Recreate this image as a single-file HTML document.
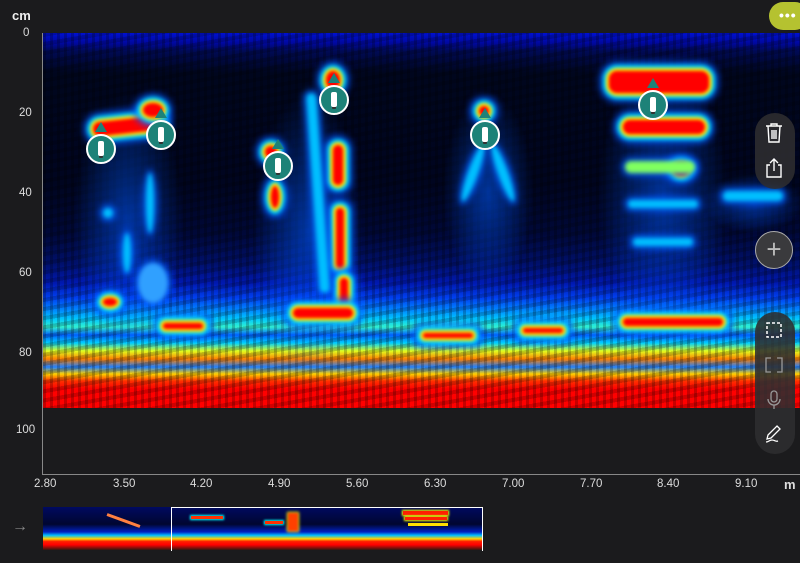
<!DOCTYPE html>
<html><head><meta charset="utf-8"><style>
*{margin:0;padding:0;box-sizing:border-box}
body{width:800px;height:563px;background:#1b1b1d;font-family:"Liberation Sans",sans-serif;color:#e6e6e6;position:relative;overflow:hidden}
.abs{position:absolute}
#plot{left:43px;top:33px;width:757px;height:375px;overflow:hidden;
background:
repeating-linear-gradient(90deg,rgba(0,0,0,.22) 0 3px,rgba(0,0,0,0) 3px 7px),
repeating-linear-gradient(170deg,rgba(0,0,0,.18) 0 4px,rgba(0,0,0,0) 4px 9px),
linear-gradient(180deg,#0010d0 0,#0008a0 10px,#000a55 18px,#00061e 40px,#000520 150px,#000838 200px,#00106a 230px,#0018b0 250px,#0040f0 265px,#0080ff 276px,#00c8ff 286px,#30f0d0 294px,#0060ff 302px,#00d0ff 310px,#e0ff20 318px,#ff8000 326px,#2080ff 334px,#ffd000 341px,#ff3000 348px,#ff0000 356px,#ff0000 375px)}
.glow{position:absolute;border-radius:50%;background:radial-gradient(closest-side,rgba(0,90,255,.55),rgba(0,60,255,0));}
.b{position:absolute;border-radius:50%;background:#ff0000;box-shadow:0 0 0 3px #ffe000,0 0 3px 6px #00e8ff,0 0 6px 10px rgba(0,80,255,.7);filter:blur(1.5px)}
.c{position:absolute;border-radius:50%;background:#00c0ff;box-shadow:0 0 4px 4px rgba(0,90,255,.7);filter:blur(2px)}
.ax{position:absolute;font-size:11.5px;color:#ddd}
.mk{position:absolute;width:30px;height:30px;border-radius:50%;background:#1d8278;border:2px solid #fff}
.mk::before{content:"";position:absolute;left:7px;top:-14px;border-left:6px solid transparent;border-right:6px solid transparent;border-bottom:10px solid #1d8278}
.mk::after{content:"";position:absolute;left:10px;top:5px;width:6px;height:15px;background:#fff;border-radius:2px;box-shadow:0 3px 0 -1px #333}
.pill{position:absolute;left:755px;width:40px;background:rgba(45,45,48,.88);border-radius:20px}
</style></head><body>
<div class="abs" style="left:12px;top:8px;font-size:13px;font-weight:bold;color:#eee">cm</div>
<div class="abs" style="left:769px;top:2px;width:40px;height:28px;border-radius:14px;background:#b5c230;color:#fff;font-size:14px;font-weight:bold;padding:5px 0 0 10px;letter-spacing:1px">•••</div>

<div id="plot" class="abs">
 <div class="glow" style="left:30px;top:60px;width:110px;height:260px"></div>
 <div class="glow" style="left:210px;top:60px;width:110px;height:280px"></div>
 <div class="glow" style="left:400px;top:60px;width:90px;height:200px"></div>
 <div class="glow" style="left:555px;top:30px;width:130px;height:270px"></div>
 <div class="glow" style="left:660px;top:140px;width:100px;height:60px"></div>
 <!-- column 1 -->
 <div class="b" style="left:50px;top:86px;width:70px;height:14px;border-radius:7px;transform:rotate(-6deg)"></div>
 <div class="b" style="left:100px;top:70px;width:20px;height:14px"></div>
 <div class="c" style="left:60px;top:175px;width:10px;height:10px"></div>
 <div class="c" style="left:103px;top:140px;width:8px;height:60px"></div>
 <div class="c" style="left:80px;top:200px;width:8px;height:40px"></div>
 <div class="c" style="left:95px;top:230px;width:30px;height:40px;background:#30a0ff"></div>
 <!-- column 2 -->
 <div class="b" style="left:222px;top:113px;width:12px;height:12px"></div>
 <div class="b" style="left:228px;top:153px;width:8px;height:22px"></div>
 <div class="b" style="left:283px;top:38px;width:14px;height:18px"></div>
 <div class="b" style="left:290px;top:112px;width:10px;height:40px;border-radius:5px"></div>
 <div class="b" style="left:293px;top:175px;width:8px;height:60px;border-radius:4px"></div>
 <div class="b" style="left:297px;top:245px;width:8px;height:30px;border-radius:4px"></div>
 <div class="c" style="left:270px;top:60px;width:10px;height:200px;border-radius:5px;transform:rotate(-4deg)"></div>
 <!-- column 3 -->
 <div class="b" style="left:436px;top:73px;width:10px;height:10px"></div>
 <div class="c" style="left:425px;top:110px;width:10px;height:60px;transform:rotate(20deg)"></div>
 <div class="c" style="left:455px;top:110px;width:10px;height:60px;transform:rotate(-20deg)"></div>
 <!-- column 4 -->
 <div class="b" style="left:566px;top:38px;width:100px;height:22px;border-radius:8px"></div>
 <div class="b" style="left:580px;top:87px;width:82px;height:14px;border-radius:7px"></div>
 <div class="b" style="left:630px;top:130px;width:16px;height:12px"></div>
 <div class="c" style="left:582px;top:128px;width:70px;height:12px;border-radius:6px;background:#80ff60"></div>
 <div class="c" style="left:585px;top:167px;width:70px;height:8px;border-radius:4px"></div>
 <div class="c" style="left:680px;top:158px;width:60px;height:10px;border-radius:5px"></div>
 <div class="c" style="left:590px;top:205px;width:60px;height:8px;border-radius:4px"></div>
 <!-- scattered -->
 <div class="b" style="left:60px;top:265px;width:14px;height:8px"></div>
 <div class="b" style="left:250px;top:275px;width:60px;height:10px;border-radius:5px"></div>
 <div class="b" style="left:580px;top:285px;width:100px;height:8px;border-radius:4px"></div>
 <div class="b" style="left:120px;top:290px;width:40px;height:6px;border-radius:3px"></div>
 <div class="b" style="left:380px;top:300px;width:50px;height:5px;border-radius:3px"></div>
 <div class="b" style="left:480px;top:295px;width:40px;height:5px;border-radius:3px"></div>
</div>

<div class="mk" style="left:86px;top:134px"></div>
<div class="mk" style="left:146px;top:120px"></div>
<div class="mk" style="left:263px;top:151px"></div>
<div class="mk" style="left:319px;top:85px"></div>
<div class="mk" style="left:470px;top:120px"></div>
<div class="mk" style="left:638px;top:90px"></div>

<!-- axes -->
<div class="abs" style="left:42px;top:33px;width:1px;height:442px;background:#888"></div>
<div class="abs" style="left:42px;top:474px;width:758px;height:1px;background:#888"></div>
<div class="ax" style="left:23px;top:27px">0</div>
<div class="ax" style="left:19px;top:107px">20</div>
<div class="ax" style="left:19px;top:187px">40</div>
<div class="ax" style="left:19px;top:267px">60</div>
<div class="ax" style="left:19px;top:347px">80</div>
<div class="ax" style="left:16px;top:424px">100</div>
<div class="ax" style="left:34px;top:478px">2.80</div>
<div class="ax" style="left:113px;top:478px">3.50</div>
<div class="ax" style="left:190px;top:478px">4.20</div>
<div class="ax" style="left:268px;top:478px">4.90</div>
<div class="ax" style="left:346px;top:478px">5.60</div>
<div class="ax" style="left:424px;top:478px">6.30</div>
<div class="ax" style="left:502px;top:478px">7.00</div>
<div class="ax" style="left:580px;top:478px">7.70</div>
<div class="ax" style="left:657px;top:478px">8.40</div>
<div class="ax" style="left:735px;top:478px">9.10</div>
<div class="ax" style="left:784px;top:477px;font-weight:bold;font-size:13px">m</div>

<!-- tool pills -->
<div class="pill" style="top:113px;height:76px"></div>
<div class="abs" style="left:765px;top:122px;width:18px;height:22px">
<svg width="18" height="22" viewBox="0 0 18 22" fill="none" stroke="#fff" stroke-width="1.4"><path d="M1 4h16M6 4V2h6v2M3 4l1 16h10l1-16M7 8v9M9 8v9M11 8v9"/></svg></div>
<div class="abs" style="left:764px;top:157px;width:20px;height:22px">
<svg width="20" height="22" viewBox="0 0 20 22" fill="none" stroke="#fff" stroke-width="1.4"><path d="M6 8H3v12h14V8h-3M10 14V2M6 6l4-4 4 4"/></svg></div>
<div class="abs" style="left:755px;top:231px;width:38px;height:38px;border-radius:50%;background:#3a3a3d;border:1.5px solid #aaa;color:#bbb;font-size:26px;text-align:center;line-height:34px">+</div>
<div class="pill" style="top:312px;height:142px"></div>
<div class="abs" style="left:766px;top:322px"><svg width="16" height="16" fill="none" stroke="#fff" stroke-width="1.5" stroke-dasharray="3 2"><rect x="1" y="1" width="14" height="14"/></svg></div>
<div class="abs" style="left:765px;top:357px"><svg width="18" height="16" fill="none" stroke="#999" stroke-width="1.3"><path d="M6 1H1v14h5M12 1h5v14h-5"/></svg></div>
<div class="abs" style="left:767px;top:390px"><svg width="14" height="20" fill="none" stroke="#999" stroke-width="1.3"><rect x="4" y="1" width="6" height="11" rx="3"/><path d="M1 9a6 6 0 0 0 12 0M7 15v4"/></svg></div>
<div class="abs" style="left:764px;top:424px"><svg width="20" height="20" fill="none" stroke="#fff" stroke-width="1.3"><path d="M13 2l3 3-9 9-4 1 1-4zM2 18c3 0 3-2 6-2s3 2 6 1"/></svg></div>

<!-- minimap -->
<div class="abs" style="left:12px;top:518px;color:#888;font-size:16px">→</div>
<div class="abs" style="left:43px;top:507px;width:440px;height:43px;overflow:hidden;background:linear-gradient(180deg,#000a60 0,#000630 40%,#0020c0 58%,#00c0ff 66%,#ffd000 74%,#ff2000 80%,#ff0000 88%,#301810 100%)">
 <div class="abs" style="left:63px;top:12px;width:35px;height:3px;background:#ff8040;transform:rotate(20deg)"></div>
 <div class="abs" style="left:148px;top:9px;width:32px;height:3px;background:#ff3000;box-shadow:0 0 2px 1px #0ff"></div>
 <div class="abs" style="left:222px;top:14px;width:18px;height:3px;background:#ff3000;box-shadow:0 0 2px 1px #0ff"></div>
 <div class="abs" style="left:245px;top:6px;width:10px;height:18px;background:#ff4000;box-shadow:0 0 2px 1px #ff0;filter:blur(1px)"></div>
 <div class="abs" style="left:360px;top:4px;width:45px;height:4px;background:#ff2000;box-shadow:0 0 2px 1px #ff0"></div>
 <div class="abs" style="left:362px;top:10px;width:42px;height:3px;background:#ff2000;box-shadow:0 0 2px 1px #ff0"></div>
 <div class="abs" style="left:365px;top:16px;width:40px;height:3px;background:#ffe000"></div>
</div>
<div class="abs" style="left:171px;top:507px;width:312px;height:44px;border:1.5px solid #fff;border-bottom:none"></div>
</body></html>
